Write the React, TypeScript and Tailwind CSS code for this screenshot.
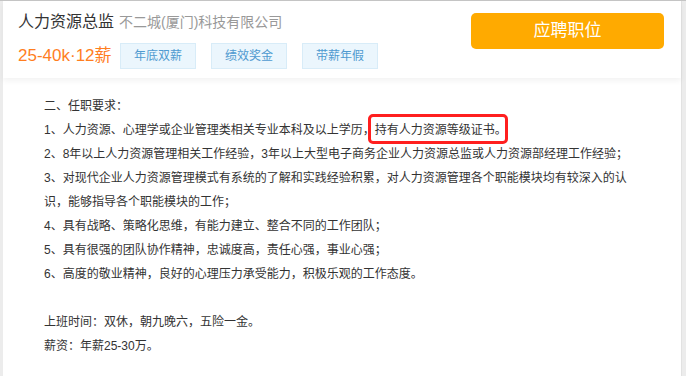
const font = { fontFamily: '"Liberation Sans", "Noto Sans CJK SC", sans-serif' }

const tags = ['年底双薪', '绩效奖金', '带薪年假']

const lines = [
  '二、任职要求：',
  null,
  '2、8年以上人力资源管理相关工作经验，3年以上大型电子商务企业人力资源总监或人力资源部经理工作经验；',
  '3、对现代企业人力资源管理模式有系统的了解和实践经验积累，对人力资源管理各个职能模块均有较深入的认识，能够指导各个职能模块的工作；',
  '4、具有战略、策略化思维，有能力建立、整合不同的工作团队；',
  '5、具有很强的团队协作精神，忠诚度高，责任心强，事业心强；',
  '6、高度的敬业精神，良好的心理压力承受能力，积极乐观的工作态度。',
  '',
  '上班时间：双休，朝九晚六，五险一金。',
  '薪资：年薪25-30万。',
]

export default function App() {
  return (
    <div
      className="w-[686px] h-[376px] overflow-hidden bg-[#ececec] border-t border-[#c4c4c4] flex"
      style={font}
    >
      <div className="ml-[3px] w-[678px] bg-white flex flex-col">
        {/* Header */}
        <div className="h-[77px] flex justify-between pl-[15px] pr-[17px] shadow-[0_3px_6px_rgba(0,0,0,0.05)] relative z-10">
          <div className="pt-[8px]">
            <div className="flex items-baseline gap-[5px] h-[26px]">
              <span className="text-[16px] text-[#333] leading-[26px]">人力资源总监</span>
              <span className="text-[14px] text-[#999]">不二城(厦门)科技有限公司</span>
            </div>
            <div className="flex items-center mt-[8px]">
              <span className="text-[17px] text-[#ff7e1f] w-[102px] leading-[26px] whitespace-nowrap">
                25-40k·12薪
              </span>
              <div className="flex gap-[15px]">
                {tags.map((t) => (
                  <span
                    key={t}
                    className="w-[76px] h-[26px] flex items-center justify-center bg-[#ebf6fd] border border-[#d8ecf8] text-[12px] text-[#4f9ad0]"
                  >
                    {t}
                  </span>
                ))}
              </div>
            </div>
          </div>
          <div className="pt-[12px]">
            <button className="w-[193px] h-[36px] rounded-[5px] bg-[#ffaa00] text-white text-[17px]">
              应聘职位
            </button>
          </div>
        </div>

        {/* Body */}
        <div className="pt-[16px] pl-[41px] w-[631px] text-[12px] leading-[24px] text-[#333]">
          {lines.map((l, i) =>
            l === null ? (
              <p key={i}>
                1、人力资源、心理学或企业管理类相关专业本科及以上学历，
                <span className="relative inline-block">
                  持有人力资源等级证书。
                  <span className="absolute -left-[7px] -right-[1px] -top-[4px] -bottom-[2px] border-[3px] border-[#ff1f1f] rounded-[5px]" />
                </span>
              </p>
            ) : (
              <p key={i} className="min-h-[24px]">
                {l}
              </p>
            )
          )}
        </div>
      </div>
      <div className="w-[5px] bg-[#ececec] border-l border-[#e2e2e2]" />
    </div>
  )
}
